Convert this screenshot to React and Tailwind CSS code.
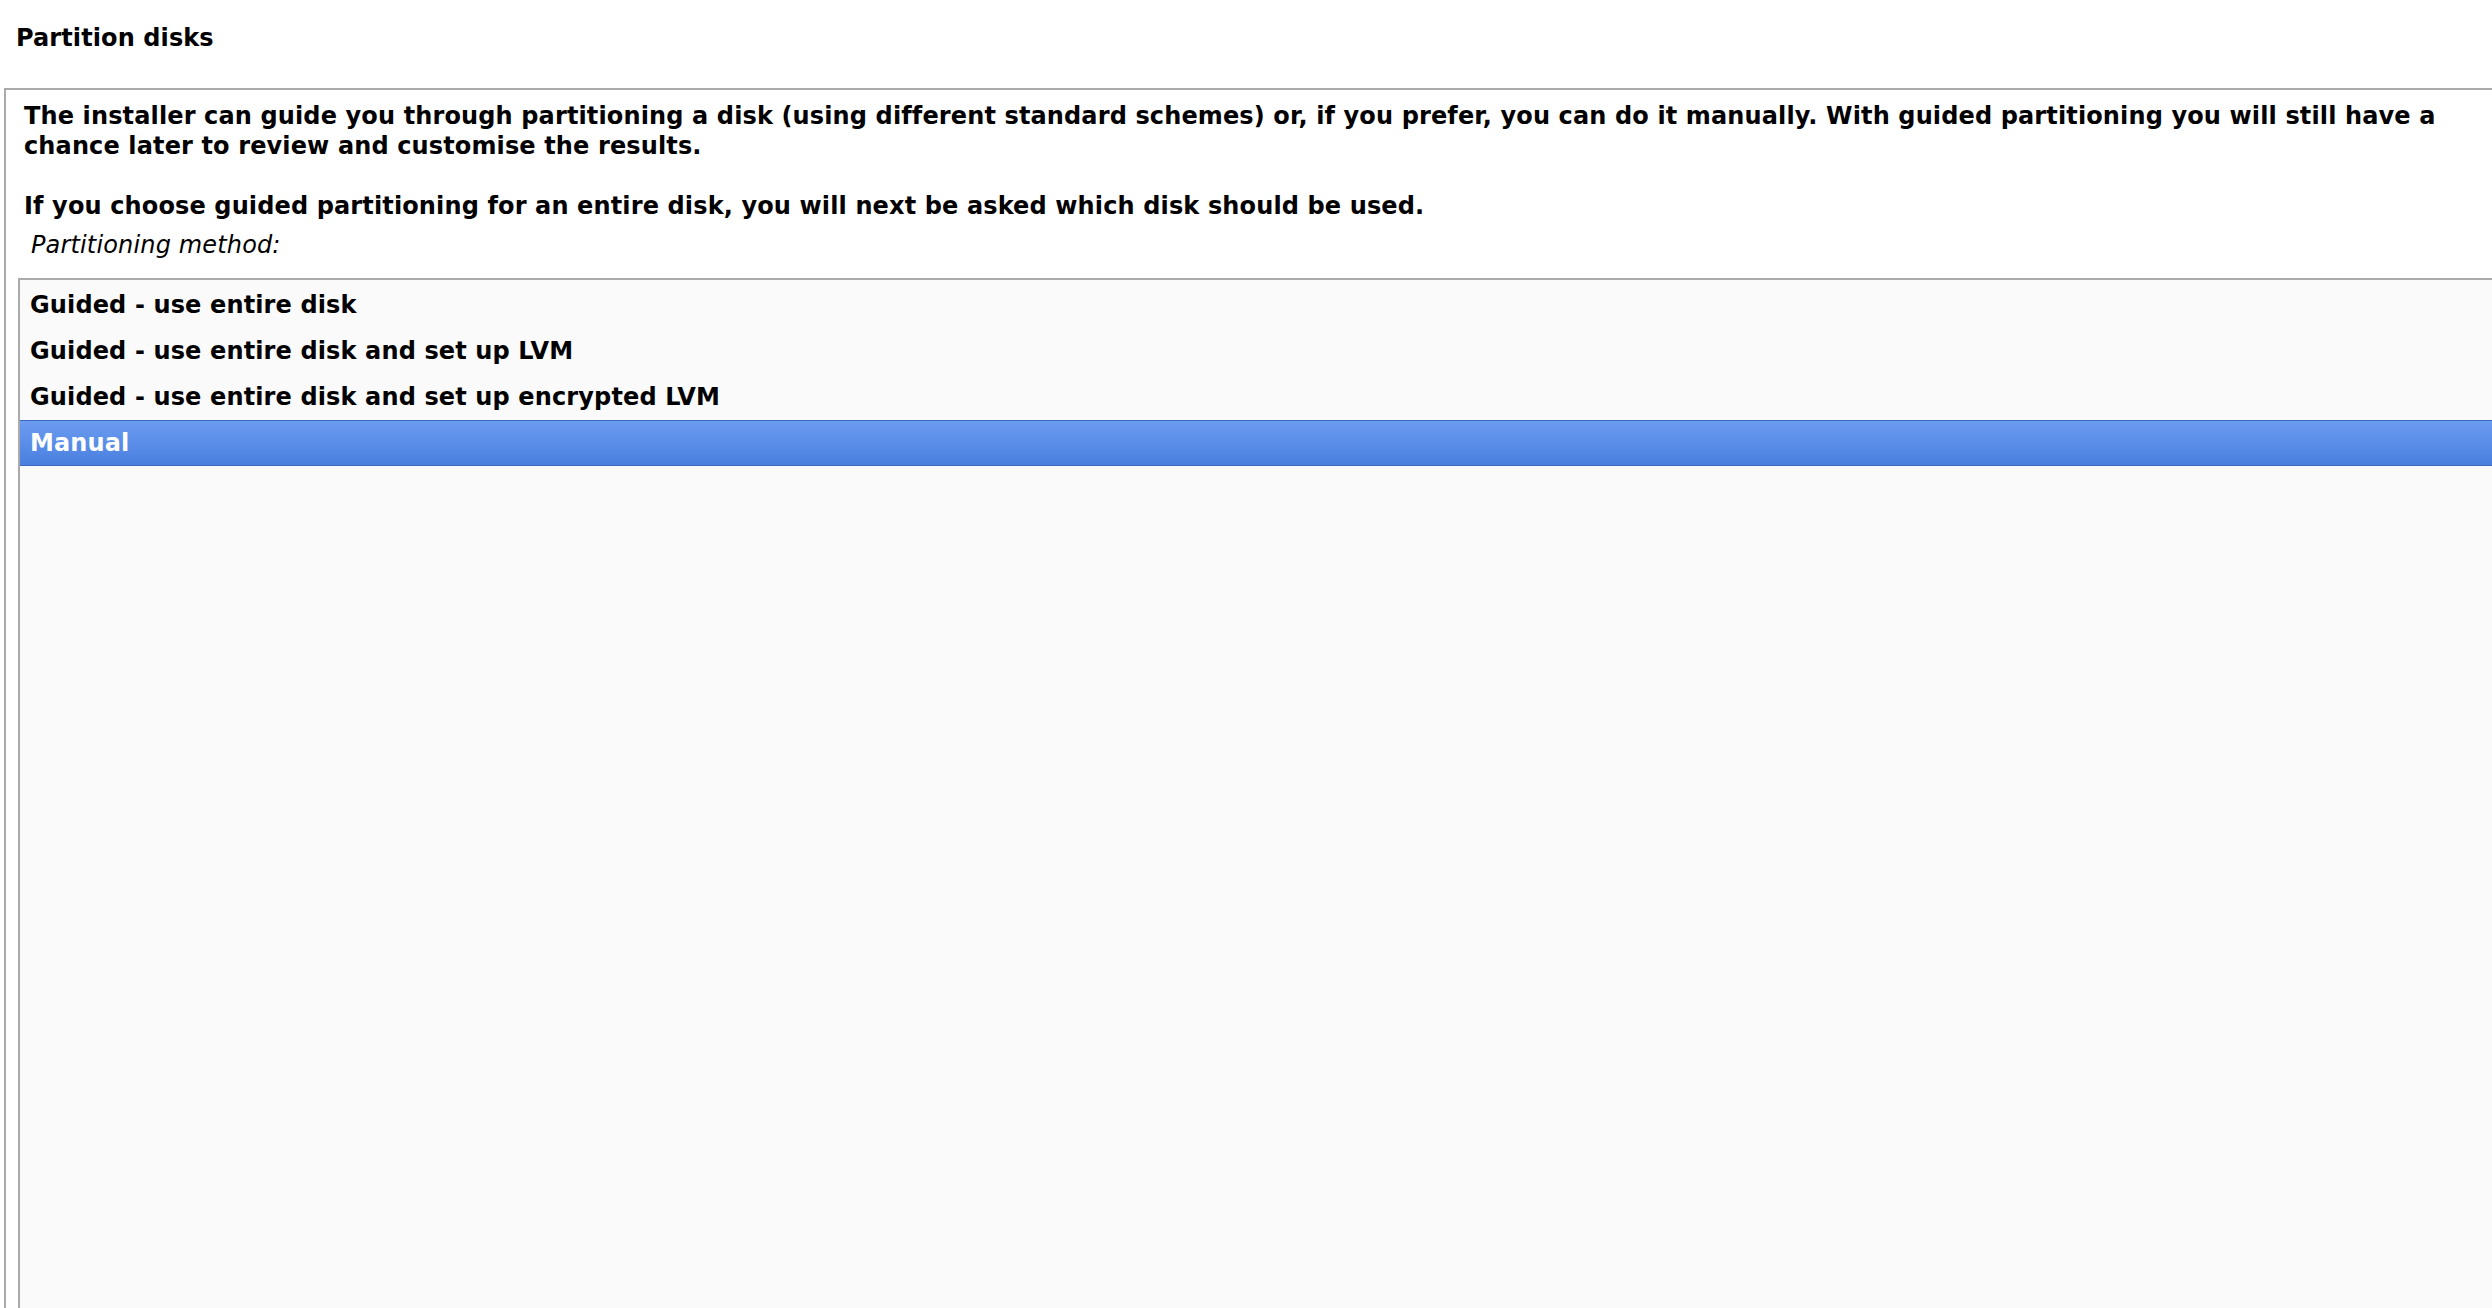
export default function App() {
  const items = [
    "Guided - use entire disk",
    "Guided - use entire disk and set up LVM",
    "Guided - use entire disk and set up encrypted LVM",
  ];
  return (
    <div className="w-[2492px] h-[1308px] overflow-hidden bg-white text-black font-['DejaVu_Sans',sans-serif]">
      <div className="pl-4 pt-[23px] h-[88px] text-[24px] leading-[30px] font-bold tracking-[0.1px]">Partition disks</div>
      <div className="ml-1 w-[2540px] h-[1300px] border-2 border-[#aaaaaa] bg-white pt-[11px] pl-[18px] flex flex-col">
        <div className="w-[2470px] text-[24px] leading-[30px] font-bold tracking-[0.13px]">
          <p>
            The installer can guide you through partitioning a disk (using different standard schemes) or, if you prefer, you can do it manually. With guided partitioning you will still have a chance later to review and customise the results.
          </p>
          <p className="mt-[30px]">
            If you choose guided partitioning for an entire disk, you will next be asked which disk should be used.
          </p>
        </div>
        <div className="mt-[9px] pl-[7px] italic text-[24px] leading-[30px] tracking-[0.15px]">Partitioning method:</div>
        <div className="mt-[18px] -ml-[6px] border-2 border-[#aaaaaa] bg-[#fafafa] flex-1 pt-[2px]">
          {items.map((t) => (
            <div key={t} className="h-[46px] leading-[46px] pl-[10px] text-[24px] font-bold whitespace-nowrap tracking-[0.13px]">
              {t}
            </div>
          ))}
          <div className="h-[46px] leading-[44px] pl-[10px] text-[24px] font-bold text-white tracking-[0.13px] border-y border-[#3c69c0] bg-linear-to-b from-[#6b9cf0] to-[#4a7fdf]">
            Manual
          </div>
        </div>
      </div>
    </div>
  );
}
